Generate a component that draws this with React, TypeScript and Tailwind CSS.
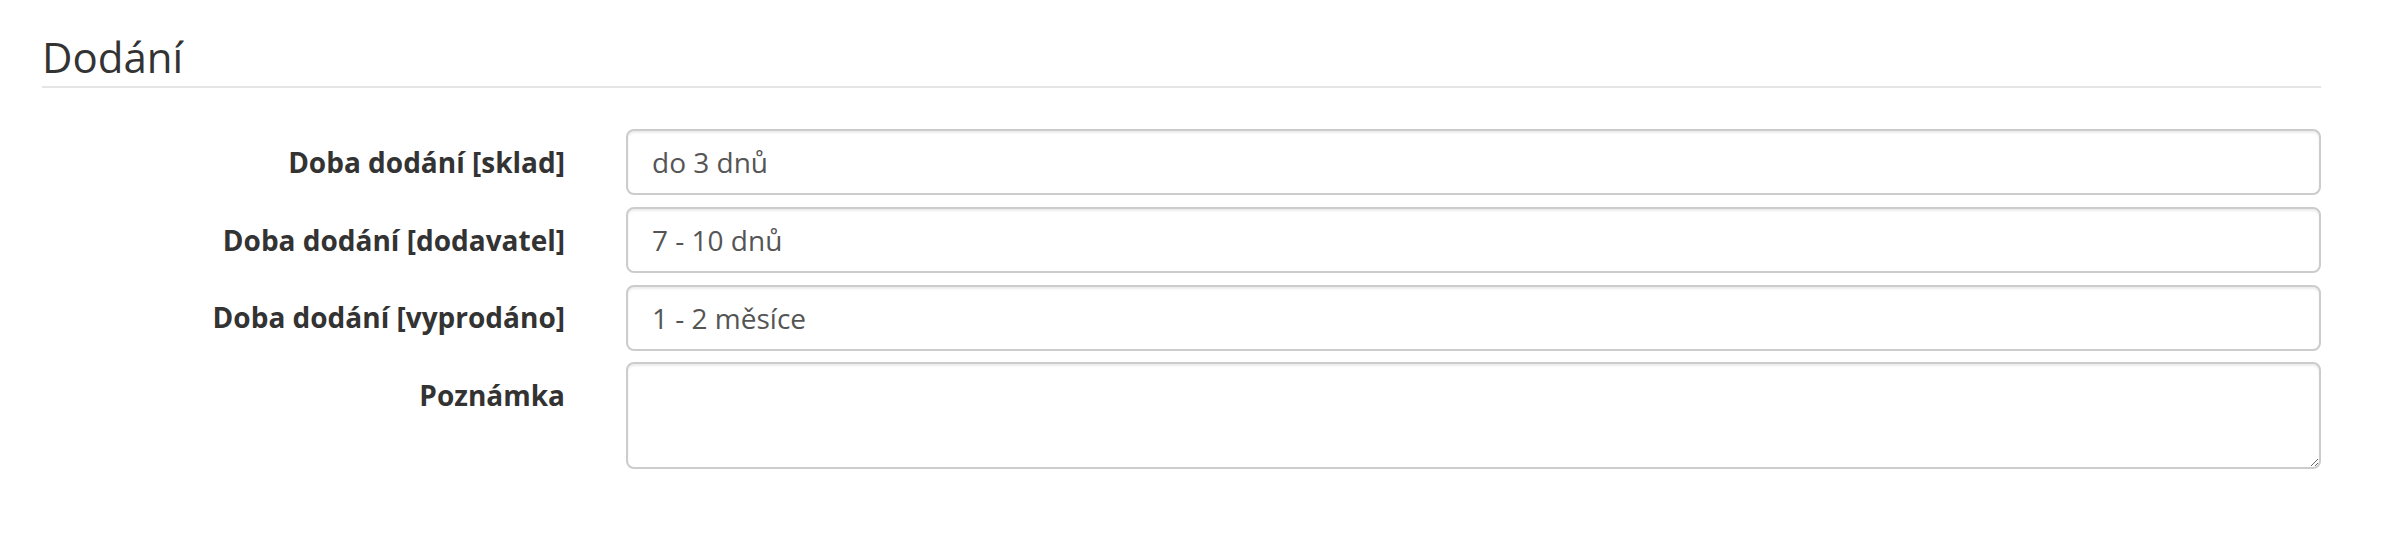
import React from "react";

const rows = [
  { label: "Doba dodání [sklad]", value: "do 3 dnů" },
  { label: "Doba dodání [dodavatel]", value: "7 - 10 dnů" },
  { label: "Doba dodání [vyprodáno]", value: "1 - 2 měsíce" },
];

export default function App() {
  return (
    <div className="w-full min-h-[538px] bg-white pl-[42px] pr-[61px] pt-[34px] font-['Open_Sans',sans-serif] text-[#333]">
      <h2 className="text-[42px] leading-[46.2px] font-normal pb-[5.6px] border-b-2 border-[#e5e5e5]">
        Dodání
      </h2>
      <form className="mt-[41.6px] flex flex-col gap-[11.7px]">
        {rows.map((r) => (
          <div key={r.label} className="flex">
            <label className="w-[554px] shrink-0 pr-[31px] pt-[12.5px] text-right text-[28px] leading-[40px] font-bold text-[#333]">
              {r.label}
            </label>
            <div className="flex-1 pl-[30px]">
              <input
                type="text"
                defaultValue={r.value}
                className="block w-full h-[66px] px-[24px] border-2 border-[#ccc] rounded-[8px] bg-white text-[28px] text-[#555] shadow-[inset_0_2px_2px_rgba(0,0,0,0.075)] outline-none font-['Open_Sans',sans-serif]"
              />
            </div>
          </div>
        ))}
        <div className="flex">
          <label className="w-[554px] shrink-0 pr-[31px] pt-[12.5px] text-right text-[28px] leading-[40px] font-bold text-[#333]">
            Poznámka
          </label>
          <div className="flex-1 pl-[30px]">
            <textarea
              className="block w-full h-[106.6px] px-[24px] py-[12px] border-2 border-[#ccc] rounded-[8px] bg-white text-[28px] text-[#555] shadow-[inset_0_2px_2px_rgba(0,0,0,0.075)] outline-none font-['Open_Sans',sans-serif] resize-y"
            />
          </div>
        </div>
      </form>
    </div>
  );
}
